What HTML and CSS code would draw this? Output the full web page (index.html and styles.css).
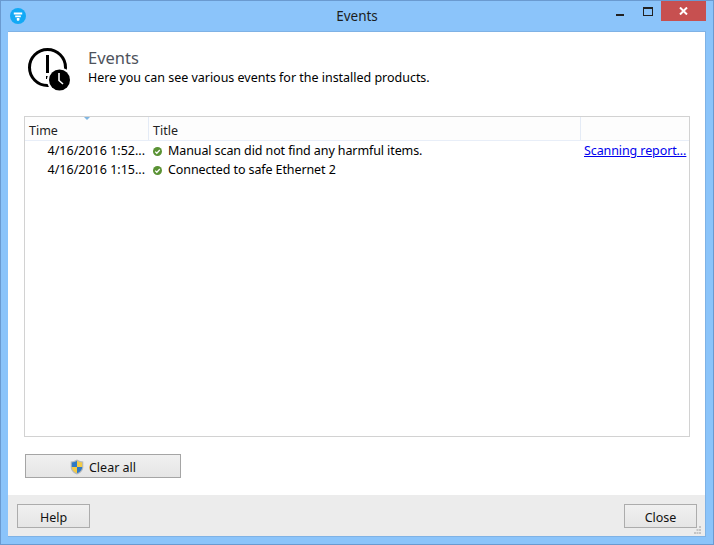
FILE: index.html
```html
<!DOCTYPE html>
<html lang="en">
<head>
<meta charset="utf-8">
<title>Events</title>
<link rel="stylesheet" href="styles.css">
</head>
<body>
<div class="window">
  <div class="titlebar">
    <svg class="app-icon" width="16" height="16" viewBox="0 0 16 16"><circle cx="8" cy="8" r="8" fill="#12a9f5"/><path d="M3.800 4.600h8.400v2H3.800zM5.200 7.400h5.600v1.800H5.200zM6.800 10h2.600v2.200L8 13l-1.200-.8z" fill="#fff"/></svg>
    <div class="title">Events</div>
    <div class="controls">
      <div class="ctl"><span class="min"></span></div>
      <div class="ctl"><span class="max"></span></div>
      <div class="ctl close-x"><svg width="9" height="8" viewBox="0 0 9 8"><path d="M1 0.500l7 7M8 0.500l-7 7" stroke="#fff" stroke-width="2" fill="none"/></svg></div>
    </div>
  </div>
  <div class="client">
    <div class="content">
      <div class="head">
        <svg class="head-icon" width="46" height="46" viewBox="0 0 46 46">
          <circle cx="20.500" cy="20.500" r="18" fill="none" stroke="#000" stroke-width="3"/>
          <rect x="19" y="8" width="3" height="18" fill="#000"/>
          <rect x="19" y="29" width="3" height="3" fill="#000"/>
          <circle cx="32.500" cy="33" r="12.500" fill="#fff"/>
          <circle cx="32.500" cy="33" r="10.500" fill="#000"/>
          <path d="M32 26v7.500l4 3.500" fill="none" stroke="#fff" stroke-width="1.600"/>
        </svg>
        <div class="head-text">
          <div class="head-title">Events</div>
          <div class="head-sub">Here you can see various events for the installed products.</div>
        </div>
      </div>
      <div class="table">
        <div class="row header">
          <div class="c-time">Time</div>
          <div class="c-title">Title</div>
          <div class="c-link"></div>
        </div>
        <div class="sort"></div>
        <div class="row">
          <div class="c-time right">4/16/2016 1:52...</div>
          <div class="c-title"><svg class="ok" width="9" height="9" viewBox="0 0 9 9"><circle cx="4.500" cy="4.500" r="4.500" fill="#5a9234"/><path d="M2.200 4.600l1.600 1.600 3-3.200" stroke="#fff" stroke-width="1.300" fill="none"/></svg>Manual scan did not find any harmful items.</div>
          <div class="c-link"><a href="#">Scanning report...</a></div>
        </div>
        <div class="row">
          <div class="c-time right">4/16/2016 1:15...</div>
          <div class="c-title"><svg class="ok" width="9" height="9" viewBox="0 0 9 9"><circle cx="4.500" cy="4.500" r="4.500" fill="#5a9234"/><path d="M2.200 4.600l1.600 1.600 3-3.200" stroke="#fff" stroke-width="1.300" fill="none"/></svg>Connected to safe Ethernet 2</div>
          <div class="c-link"></div>
        </div>
      </div>
      <button class="btn clear">
        <svg width="14" height="16" viewBox="0 0 14 16"><path d="M7 0.500C5 1.800 3 2.300 0.700 2.400V8c0 3.600 2.600 6 6.300 7.500 3.700-1.500 6.300-3.900 6.300-7.500V2.400C11 2.300 9 1.800 7 0.500z" fill="#b4b8bc"/><path d="M7 1.800C5.400 2.800 3.600 3.300 1.800 3.400V8H7z" fill="#2f79c4"/><path d="M7 1.800C8.600 2.800 10.400 3.300 12.200 3.400V8H7z" fill="#f4cb45"/><path d="M1.800 8H7v6.200C4 13 1.800 11 1.800 8z" fill="#f4cb45"/><path d="M12.200 8H7v6.200C10 13 12.200 11 12.200 8z" fill="#2f79c4"/></svg>
        Clear all
      </button>
    </div>
    <div class="footer">
      <button class="btn small">Help</button>
      <button class="btn small">Close</button>
      <svg class="grip" width="8" height="8" viewBox="0 0 8 8"><path d="M5 0h2v2H5zM2.500 3h2v2h-2zM5 3h2v2H5zM0 6h2v2H0zM2.500 6h2v2h-2zM5 6h2v2H5z" fill="#c4c4c4"/></svg>
    </div>
  </div>
</div>
</body>
</html>
```
FILE: styles.css
```css
* { box-sizing: border-box; }
html, body { margin: 0; padding: 0; }
body {
  width: 714px;
  height: 545px;
  overflow: hidden;
  font-family: "Noto Sans", "Open Sans", sans-serif;
  font-size: 12.5px;
  color: #000;
}
.window {
  width: 714px;
  height: 545px;
  display: flex;
  flex-direction: column;
  background: #8bc4fa;
  border: 1px solid #6a9ad0;
  padding: 0 7px 7px;
}
.titlebar {
  height: 30px;
  flex: none;
  display: flex;
  align-items: flex-start;
  position: relative;
}
.app-icon { margin: 7px 0 0 2px; }
.title {
  position: absolute;
  left: 0;
  right: 0;
  top: 6px;
  text-align: center;
  font-size: 13.5px;
  line-height: 19px;
  color: #1c1c1c;
}
.controls {
  margin-left: auto;
  display: flex;
}
.ctl {
  width: 26px;
  height: 20px;
  display: flex;
  align-items: center;
  justify-content: center;
}
.min { width: 8px; height: 2px; background: #222; margin-top: 8px; margin-left: 2px; }
.max { width: 10px; height: 9px; border: 1px solid #222; border-top-width: 2px; margin-top: 1px; margin-left: 6px; }
.close-x { width: 45px; background: #c75050; margin-left: 3px; }
.client {
  flex: 1;
  display: flex;
  flex-direction: column;
  background: #fff;
  border: 1px solid #7fb2e5;
  border-width: 1px 1px 1px 0;
  min-height: 0;
}
.content {
  flex: 1;
  padding: 14px 15px 0 16px;
  min-height: 0;
}
.head { display: flex; height: 55px; margin-bottom: 15px; }
.head-icon { margin-left: 3px; flex: none; margin-top: 1px; }
.head-text { margin-left: 15px; margin-top: 1px; }
.head-title { font-size: 16.500px; line-height: 22px; color: #4e535c; }
.head-sub { line-height: 17px; letter-spacing: -0.02px; }
.table {
  position: relative;
  height: 321px;
  border: 1px solid #d2d2d2;
  overflow: hidden;
}
.sort {
  position: absolute;
  left: 59px;
  top: 0;
  width: 0;
  height: 0;
  border: 3px solid transparent;
  border-top: 3px solid #7fb6e2;
  border-bottom: 0;
}
.row {
  display: flex;
  height: 19px;
  line-height: 19px;
  white-space: nowrap;
  letter-spacing: -0.1px;
}
.row.header {
  height: 24px;
  border-bottom: 1px solid #e8eef8;
  background: #fdfdfd;
  color: #222;
  letter-spacing: 0;
}
.header .c-time, .header .c-title, .header .c-link {
  border-right: 1px solid #e4ebf6;
  padding-top: 4px;
  height: 23px;
}
.header .c-link { border-right: 0; }
.c-time { width: 124px; padding-left: 4px; flex: none; }
.c-time.right { text-align: right; padding: 0 4px 0 0; letter-spacing: 0; }
.c-title { width: 432px; padding-left: 4px; flex: none; }
.c-link { flex: 1; padding-left: 3px; }
.c-link a { color: #0000ee; }
.ok { margin-right: 6px; vertical-align: -0.500px; }
.btn {
  display: flex;
  align-items: center;
  justify-content: center;
  height: 24px;
  padding: 2px 0 0;
  font: inherit;
  color: #111;
  background: linear-gradient(#f0f0f0, #e5e5e5);
  border: 1px solid #acacac;
}
.clear { width: 156px; margin: 17px 0 0 1px; gap: 5px; border-color: #a5a5a5; }
.footer {
  height: 41px;
  flex: none;
  position: relative;
  background: #ececec;
  display: flex;
  justify-content: space-between;
  align-items: flex-start;
  padding: 9px 8px 0 9px;
}
.small { width: 73px; }
.grip { position: absolute; right: 3px; bottom: 2px; }
```
